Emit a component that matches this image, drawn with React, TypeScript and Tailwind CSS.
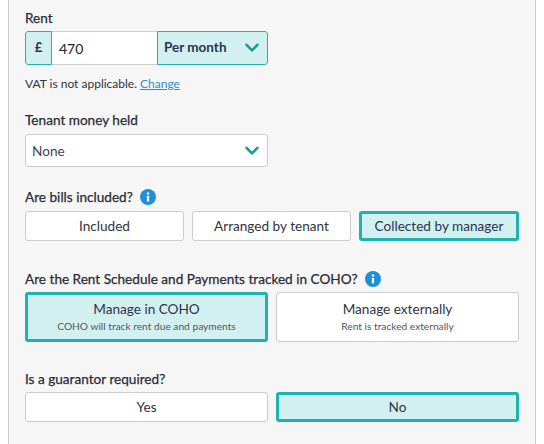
import { ReactNode } from "react";

const FONT = "font-['Lato','Noto_Sans',sans-serif]";

function Chevron() {
  return (
    <svg width="14" height="10" viewBox="0 0 14 10" fill="none" className="shrink-0">
      <path d="M1.6 1.8 7 7.4l5.4-5.6" stroke="#1a9c96" strokeWidth="2.6" strokeLinecap="round" strokeLinejoin="round" />
    </svg>
  );
}

function InfoIcon() {
  return (
    <svg width="16" height="16" viewBox="0 0 16 16" className="shrink-0">
      <circle cx="8" cy="8" r="8" fill="#1f8fd6" />
      <rect x="6.9" y="6.8" width="2.2" height="5.6" rx="0.4" fill="#fff" />
      <circle cx="8" cy="4.5" r="1.3" fill="#fff" />
    </svg>
  );
}

function Label({ children, info }: { children: ReactNode; info?: boolean }) {
  return (
    <div className="flex items-center gap-[7px] h-4 text-[13.6px] text-[#2b2b35] [-webkit-text-stroke:0.25px_#2b2b35]">
      <span>{children}</span>
      {info && <InfoIcon />}
    </div>
  );
}

function Choice({ title, sub, active, h }: { title: string; sub?: string; active?: boolean; h: string }) {
  return (
    <div
      className={`${h} min-w-0 rounded-[3px] flex flex-col items-center justify-center ${
        active ? "border-[3px] border-[#1fb3ad] bg-[#d2f0ef] text-[#2c3350]" : "border border-[#cccccc] bg-white text-[#33333d]"
      } ${sub ? "pb-[2px]" : ""}`}
    >
      <div className="text-[13.6px] leading-[18px]">{title}</div>
      {sub && <div className="text-[10.2px] leading-[14px] mt-[1px] text-[#555560]">{sub}</div>}
    </div>
  );
}

export default function App() {
  return (
    <div className={`${FONT} w-[544px] h-[444px] bg-white overflow-hidden`}>
      <div className="ml-2 w-[528px] h-[444px] bg-[#f6f6f6] border-x border-[#cfcfcf] pl-4 pr-4 pt-[10px]">
        <Label>Rent</Label>
        <div className="mt-[5px] flex w-[243px] h-[34px] rounded-[3px] overflow-hidden">
          <div className="w-[27px] bg-[#d2f0ef] border border-[#1fb3ad] rounded-l-[3px] flex items-center justify-center text-[13px] font-bold text-[#2c3350]">
            £
          </div>
          <div className="w-[105px] bg-white border-y border-[#cccccc] pl-[7px] flex items-center text-[14px] text-[#22222a]">470</div>
          <div className="flex-1 bg-[#d2f0ef] border border-[#1fb3ad] rounded-r-[3px] pl-[6px] pr-2 flex items-center justify-between text-[13.5px] font-bold text-[#2c3350]">
            <span className="pb-[2px]">Per month</span>
            <Chevron />
          </div>
        </div>
        <div className="mt-[11px] h-4 flex items-center text-[12px] text-[#33333d]">
          VAT is not applicable.
          <span className="ml-[3px] text-[#2a8fd0] underline">Change</span>
        </div>

        <div className="mt-[20px]">
          <Label>Tenant money held</Label>
        </div>
        <div className="mt-[6px] w-[243px] h-[33px] rounded-[3px] border border-[#cccccc] bg-white pl-[6px] pr-2 flex items-center justify-between text-[13.6px] text-[#44444e]">
          <span className="pt-[1px]">None</span>
          <Chevron />
        </div>

        <div className="mt-[22px]">
          <Label info>Are bills included?</Label>
        </div>
        <div className="mt-[6px] grid grid-cols-[159px_159px_160px] gap-2 w-[494px]">
          <Choice h="h-[30px]" title="Included" />
          <Choice h="h-[30px]" title="Arranged by tenant" />
          <Choice h="h-[30px]" title="Collected by manager" active />
        </div>

        <div className="mt-[30px]">
          <Label info>Are the Rent Schedule and Payments tracked in COHO?</Label>
        </div>
        <div className="mt-[5px] grid grid-cols-2 gap-2 w-[494px]">
          <Choice h="h-[50px]" title="Manage in COHO" sub="COHO will track rent due and payments" active />
          <Choice h="h-[50px]" title="Manage externally" sub="Rent is tracked externally" />
        </div>

        <div className="mt-[29px]">
          <Label>Is a guarantor required?</Label>
        </div>
        <div className="mt-[5px] grid grid-cols-2 gap-2 w-[494px]">
          <Choice h="h-[30px]" title="Yes" />
          <Choice h="h-[30px]" title="No" active />
        </div>
      </div>
    </div>
  );
}
